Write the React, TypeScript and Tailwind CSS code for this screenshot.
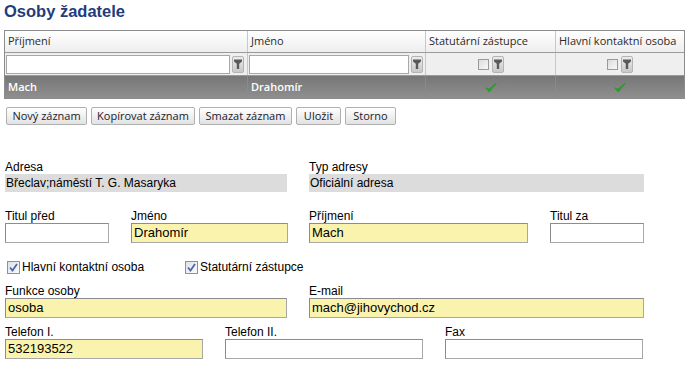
const tableFont = { fontFamily: '"Open Sans", "Noto Sans", sans-serif' };

function Funnel() {
  return (
    <svg width="8" height="10" viewBox="0 0 8 10">
      <path d="M0 0.5h8v2L5.2 4.8V10H2.8V4.8L0 2.5z" fill="#5a5a5a" />
    </svg>
  );
}

function FilterButton() {
  return (
    <div className="flex h-[17px] w-[12px] items-center justify-center rounded-[2px] border border-[#b4b4b4] bg-gradient-to-b from-[#ececec] to-[#c9c9c9]">
      <Funnel />
    </div>
  );
}

function SmallBox() {
  return <div className="h-[11px] w-[11px] border border-[#9a9a9a] bg-gradient-to-br from-[#dcdcdc] to-[#f8f8f8]" />;
}

function GreenCheck() {
  return (
    <svg width="12" height="11" viewBox="0 0 12 11">
      <path d="M1 6 L4.2 9.5 L11 1.5 L4.3 7.2 Z" fill="#2f9a2f" stroke="#2f9a2f" strokeWidth="1.2" strokeLinejoin="round" />
    </svg>
  );
}

function FormCheck({ label }: { label: string }) {
  return (
    <div className="flex items-center gap-[2px]">
      <div className="flex h-[13px] w-[13px] items-center justify-center border border-[#8593aa] bg-gradient-to-br from-[#dde1e8] to-[#fbfbfd]">
        <svg width="9" height="9" viewBox="0 0 9 9">
          <path d="M1 4.5 L3.5 7.5 L8 1" fill="none" stroke="#4a62aa" strokeWidth="1.7" />
        </svg>
      </div>
      <span>{label}</span>
    </div>
  );
}

function Field({
  label,
  value = "",
  w,
  yellow = false,
  ml = "",
}: {
  label: string;
  value?: string;
  w: string;
  yellow?: boolean;
  ml?: string;
}) {
  return (
    <div className={`${w} ${ml}`}>
      <div className="h-[13px] leading-[13px]">{label}</div>
      <div
        className={`h-[20px] border border-[#a8a8a8] border-t-[#8c8c8c] border-l-[#8c8c8c] pl-[2px] text-[13px] leading-[18px] ${
          yellow ? "bg-[#faf3ad]" : "bg-white"
        }`}
      >
        {value}
      </div>
    </div>
  );
}

function ReadOnly({ label, value, w, ml = "" }: { label: string; value: string; w: string; ml?: string }) {
  return (
    <div className={`${w} ${ml}`}>
      <div className="h-[14px] leading-[14px]">{label}</div>
      <div className="h-[18px] bg-[#dcdcdc] pl-[1px] leading-[18px]">{value}</div>
    </div>
  );
}

const buttons = [
  { label: "Nový záznam", w: "w-[81px]" },
  { label: "Kopírovat záznam", w: "w-[104px]" },
  { label: "Smazat záznam", w: "w-[93px]" },
  { label: "Uložit", w: "w-[45px]" },
  { label: "Storno", w: "w-[51px]" },
];

export default function App() {
  return (
    <div className="h-[375px] w-[697px] overflow-hidden bg-white" style={{ fontFamily: '"Liberation Sans", Arial, sans-serif' }}>
      <h1 className="pl-[4px] pt-[1px] text-[16.5px] font-bold leading-[20px] text-[#1f3d7c]">Osoby žadatele</h1>

      {/* grid */}
      <div className="ml-[4px] mt-[9px] w-[681px] border border-[#8c8c8c] text-[11px]" style={tableFont}>
        <div className="grid h-[22px] grid-cols-[242px_178px_130px_129px] border-b border-[#9a9a9a] bg-gradient-to-b from-white to-[#eeeeee] text-[#2b2b2b]">
          <div className="flex items-center pl-[3px]">Příjmení</div>
          <div className="flex items-center border-l border-[#c8c8c8] pl-[3px]">Jméno</div>
          <div className="flex items-center border-l border-[#c8c8c8] pl-[3px]">Statutární zástupce</div>
          <div className="flex items-center border-l border-[#c8c8c8] pl-[3px]">Hlavní kontaktní osoba</div>
        </div>
        <div className="grid h-[23px] grid-cols-[242px_178px_130px_129px] border-b border-[#9a9a9a] bg-[#efefef]">
          <div className="flex items-center gap-[2px] pl-[1px]">
            <div className="h-[19px] w-[224px] border border-[#a8a8a8] bg-white" />
            <FilterButton />
          </div>
          <div className="flex items-center gap-[2px] border-l border-[#c8c8c8] pl-[1px]">
            <div className="h-[19px] w-[160px] border border-[#a8a8a8] bg-white" />
            <FilterButton />
          </div>
          <div className="flex items-center justify-center gap-[3px] border-l border-[#c8c8c8]">
            <SmallBox />
            <FilterButton />
          </div>
          <div className="flex items-center justify-center gap-[3px] border-l border-[#c8c8c8]">
            <SmallBox />
            <FilterButton />
          </div>
        </div>
        <div className="grid h-[22px] grid-cols-[242px_178px_130px_129px] bg-gradient-to-b from-[#777777] to-[#8f8f8f] font-semibold text-white">
          <div className="flex items-center pl-[3px]">Mach</div>
          <div className="flex items-center border-l border-[#8a8a8a] pl-[3px]">Drahomír</div>
          <div className="flex items-center justify-center border-l border-[#8a8a8a]">
            <GreenCheck />
          </div>
          <div className="flex items-center justify-center border-l border-[#8a8a8a]">
            <GreenCheck />
          </div>
        </div>
      </div>

      {/* toolbar */}
      <div className="ml-[6px] mt-[8px] flex gap-[4px] text-[11px]" style={tableFont}>
        {buttons.map((b) => (
          <div
            key={b.label}
            className={`${b.w} flex h-[18px] items-center justify-center rounded-[2px] border border-[#b0b0b0] bg-gradient-to-b from-white to-[#e2e2e2] text-[#1a1a2a]`}
          >
            {b.label}
          </div>
        ))}
      </div>

      {/* form */}
      <div className="mt-[35px] pl-[5px] text-[12px] text-black">
        <div className="flex">
          <ReadOnly label="Adresa" value="Břeclav;náměstí T. G. Masaryka" w="w-[282px]" />
          <ReadOnly label="Typ adresy" value="Oficiální adresa" w="w-[335px]" ml="ml-[22px]" />
        </div>

        <div className="mt-[18px] flex">
          <Field label="Titul před" w="w-[104px]" />
          <Field label="Jméno" value="Drahomír" w="w-[157px]" yellow ml="ml-[22px]" />
          <Field label="Příjmení" value="Mach" w="w-[219px]" yellow ml="ml-[21px]" />
          <Field label="Titul za" w="w-[94px]" ml="ml-[22px]" />
        </div>

        <div className="mt-[17px] flex h-[14px] items-center pl-[2px]">
          <FormCheck label="Hlavní kontaktní osoba" />
          <div className="ml-[41px]">
            <FormCheck label="Statutární zástupce" />
          </div>
        </div>

        <div className="mt-[11px] flex">
          <Field label="Funkce osoby" value="osoba" w="w-[282px]" yellow />
          <Field label="E-mail" value="mach@jihovychod.cz" w="w-[335px]" yellow ml="ml-[22px]" />
        </div>

        <div className="mt-[8px] flex">
          <Field label="Telefon I." value="532193522" w="w-[198px]" yellow />
          <Field label="Telefon II." w="w-[198px]" ml="ml-[22px]" />
          <Field label="Fax" w="w-[198px]" ml="ml-[22px]" />
        </div>
      </div>
    </div>
  );
}
